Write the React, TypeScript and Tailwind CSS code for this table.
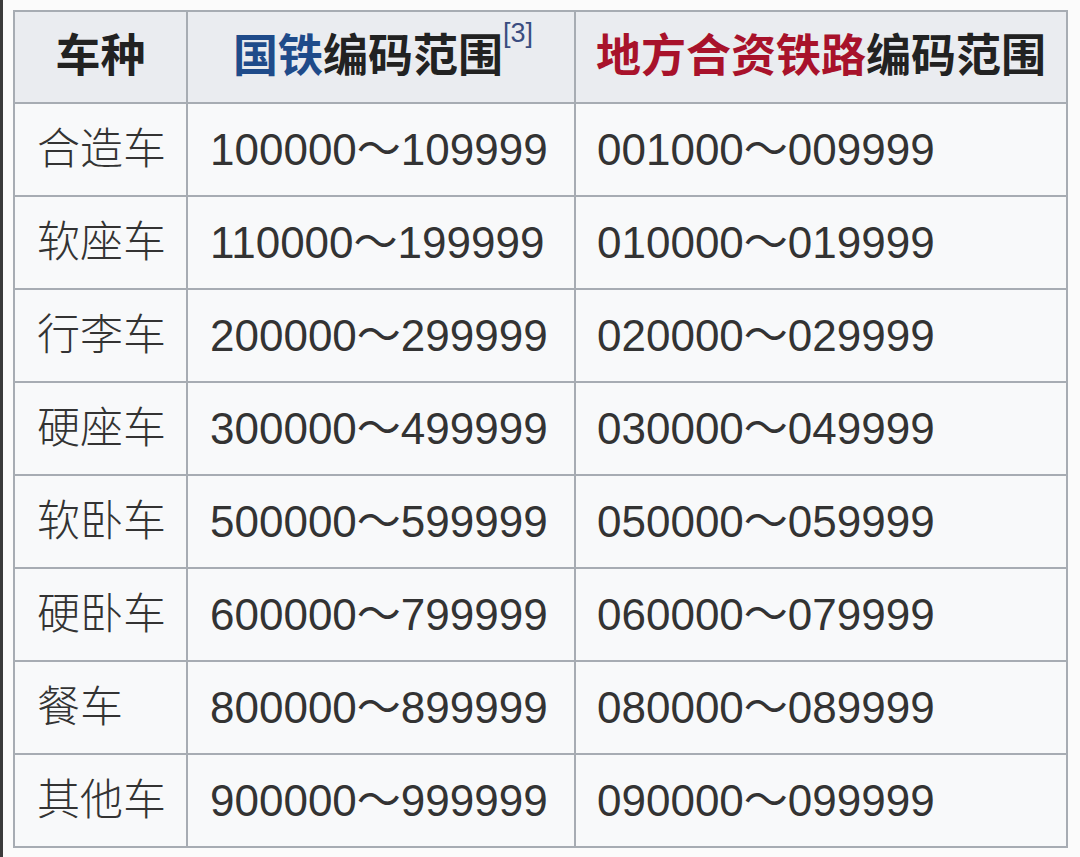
const rows: [string, string, string][] = [
  ["合造车", "100000～109999", "001000～009999"],
  ["软座车", "110000～199999", "010000～019999"],
  ["行李车", "200000～299999", "020000～029999"],
  ["硬座车", "300000～499999", "030000～049999"],
  ["软卧车", "500000～599999", "050000～059999"],
  ["硬卧车", "600000～799999", "060000～079999"],
  ["餐车", "800000～899999", "080000～089999"],
  ["其他车", "900000～999999", "090000～099999"],
];

const font = { fontFamily: '"Liberation Sans", "Noto Sans CJK SC", sans-serif' };

export default function App() {
  return (
    <div className="flex h-[857px] w-[1080px] bg-[#fbfbfb]" style={font}>
      <div className="w-[3px] shrink-0 bg-[#3b3b3b]" />
      <div className="pl-[10px] pt-[10px]">
        <div className="grid grid-cols-[171px_386px_490px] grid-rows-[90px_repeat(8,91px)] gap-[2px] border-2 border-[#a7acb3] bg-[#a7acb3]">
          <div className="flex items-center justify-center bg-[#eaecf0] text-[45px] font-bold text-[#222]">
            车种
          </div>
          <div className="flex items-center justify-center bg-[#eaecf0] pl-[4px] text-[45px] font-bold text-[#222]">
            <span className="text-[#1f4b8a]">国铁</span>
            <span>编码范围</span>
            <sup className="-mt-[22px] text-[27px] font-normal text-[#3a4c80]">[3]</sup>
          </div>
          <div className="flex items-center justify-center bg-[#eaecf0] text-[45px] font-bold text-[#222]">
            <span className="text-[#a8122b]">地方合资铁路</span>
            <span>编码范围</span>
          </div>
          {rows.map(([kind, national, local]) => (
            <div key={kind} className="contents">
              <div className="flex items-center bg-[#f8f9fa] pl-[22px] text-[43px] font-light text-[#333]">
                {kind}
              </div>
              <div className="flex items-center bg-[#f8f9fa] pl-[22px] text-[44px] text-[#333]">
                {national}
              </div>
              <div className="flex items-center bg-[#f8f9fa] pl-[21px] text-[44px] text-[#333]">
                {local}
              </div>
            </div>
          ))}
        </div>
      </div>
    </div>
  );
}
